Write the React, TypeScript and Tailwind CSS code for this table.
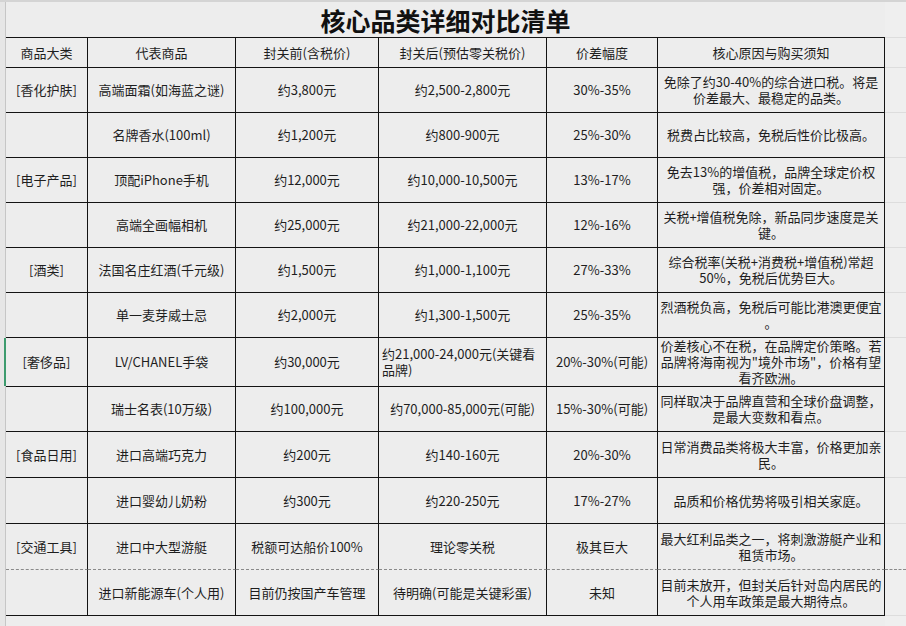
type Cell = string | string[]

interface Row {
  h: string
  cells: [Cell, Cell, Cell, Cell, Cell, Cell]
  leftAlign4?: boolean
  dashed?: boolean
  selected?: boolean
}

const GRID = 'grid grid-cols-[6px_82px_148px_143px_168px_111px_227px_21px]'

const HEADERS = [
  '商品大类',
  '代表商品',
  '封关前(含税价)',
  '封关后(预估零关税价)',
  '价差幅度',
  '核心原因与购买须知',
]

const ROWS: Row[] = [
  {
    h: 'h-[45px]',
    cells: [
      '[香化护肤]',
      '高端面霜(如海蓝之谜)',
      '约3,800元',
      '约2,500-2,800元',
      '30%-35%',
      ['免除了约30-40%的综合进口税。将是', '价差最大、最稳定的品类。'],
    ],
  },
  {
    h: 'h-[45px]',
    cells: ['', '名牌香水(100ml)', '约1,200元', '约800-900元', '25%-30%', ['税费占比较高，免税后性价比极高。']],
  },
  {
    h: 'h-[45px]',
    cells: [
      '[电子产品]',
      '顶配iPhone手机',
      '约12,000元',
      '约10,000-10,500元',
      '13%-17%',
      ['免去13%的增值税，品牌全球定价权', '强，价差相对固定。'],
    ],
  },
  {
    h: 'h-[45px]',
    cells: [
      '',
      '高端全画幅相机',
      '约25,000元',
      '约21,000-22,000元',
      '12%-16%',
      ['关税+增值税免除，新品同步速度是关', '键。'],
    ],
  },
  {
    h: 'h-[45px]',
    cells: [
      '[酒类]',
      '法国名庄红酒(千元级)',
      '约1,500元',
      '约1,000-1,100元',
      '27%-33%',
      ['综合税率(关税+消费税+增值税)常超', '50%，免税后优势巨大。'],
    ],
  },
  {
    h: 'h-[45px]',
    cells: [
      '',
      '单一麦芽威士忌',
      '约2,000元',
      '约1,300-1,500元',
      '25%-35%',
      ['烈酒税负高，免税后可能比港澳更便宜', '。'],
    ],
  },
  {
    h: 'h-[48px]',
    selected: true,
    leftAlign4: true,
    cells: [
      '[奢侈品]',
      'LV/CHANEL手袋',
      '约30,000元',
      ['约21,000-24,000元(关键看', '品牌)'],
      '20%-30%(可能)',
      ['价差核心不在税，在品牌定价策略。若', '品牌将海南视为"境外市场"，价格有望', '看齐欧洲。'],
    ],
  },
  {
    h: 'h-[46px]',
    cells: [
      '',
      '瑞士名表(10万级)',
      '约100,000元',
      '约70,000-85,000元(可能)',
      '15%-30%(可能)',
      ['同样取决于品牌直营和全球价盘调整，', '是最大变数和看点。'],
    ],
  },
  {
    h: 'h-[46px]',
    cells: [
      '[食品日用]',
      '进口高端巧克力',
      '约200元',
      '约140-160元',
      '20%-30%',
      ['日常消费品类将极大丰富，价格更加亲', '民。'],
    ],
  },
  {
    h: 'h-[46px]',
    cells: ['', '进口婴幼儿奶粉', '约300元', '约220-250元', '17%-27%', ['品质和价格优势将吸引相关家庭。']],
  },
  {
    h: 'h-[46px]',
    dashed: true,
    cells: [
      '[交通工具]',
      '进口中大型游艇',
      '税额可达船价100%',
      '理论零关税',
      '极其巨大',
      ['最大红利品类之一，将刺激游艇产业和', '租赁市场。'],
    ],
  },
  {
    h: 'h-[46px]',
    cells: [
      '',
      '进口新能源车(个人用)',
      '目前仍按国产车管理',
      '待明确(可能是关键彩蛋)',
      '未知',
      ['目前未放开，但封关后针对岛内居民的', '个人用车政策是最大期待点。'],
    ],
  },
]

function CellText({ value }: { value: Cell }) {
  if (Array.isArray(value)) {
    return (
      <span className="flex flex-col">
        {value.map((line, i) => (
          <span key={i} className="block whitespace-nowrap">
            {line}
          </span>
        ))}
      </span>
    )
  }
  return <span className="whitespace-nowrap">{value}</span>
}

function TableRow({ row }: { row: Row }) {
  const edge = row.dashed
    ? 'border-r border-b border-r-[#141414] border-b-[#8a8a8a] [border-bottom-style:dashed]'
    : 'border-r border-b border-[#141414]'
  return (
    <div className={`${GRID} ${row.h}`}>
      <div
        className={
          row.selected
            ? 'border-r-2 border-[#3d9b6e] bg-[#e6e6e6]'
            : 'border-r border-[#c6c6c6] bg-[#e6e6e6]'
        }
      />
      {row.cells.map((cell, i) => (
        <div
          key={i}
          className={`flex items-center ${
            i === 3 && row.leftAlign4
              ? 'justify-start px-[3px] text-left'
              : 'justify-center px-0.5 text-center'
          } ${edge}`}
        >
          <CellText value={cell} />
        </div>
      ))}
      <div
        className={
          row.dashed
            ? 'border-b border-[#8a8a8a] border-dashed bg-[#efefef]'
            : 'border-b border-[#dddddd] bg-[#efefef]'
        }
      />
    </div>
  )
}

export default function App() {
  return (
    <div className="flex h-[626px] w-[906px] flex-col overflow-hidden border-t-2 border-[#d4d4d4] bg-[#ededed] font-['Noto_Sans_CJK_SC',sans-serif] text-[13px] leading-[16px] text-[#1e1e1e]">
      <div className={`${GRID} h-[36px]`}>
        <div className="border-r border-[#c6c6c6] bg-[#e6e6e6]" />
        <div className="col-span-6 flex items-center justify-center border-b border-[#141414] pt-px text-[25px] font-bold leading-none text-[#111]">
          核心品类详细对比清单
        </div>
        <div className="border-b border-[#dddddd] bg-[#efefef]" />
      </div>

      <div className={`${GRID} h-[30px]`}>
        <div className="border-r border-[#c6c6c6] bg-[#e6e6e6]" />
        {HEADERS.map((label) => (
          <div
            key={label}
            className="flex items-center justify-center border-r border-b border-[#141414] text-center"
          >
            <span className="whitespace-nowrap">{label}</span>
          </div>
        ))}
        <div className="border-b border-[#dddddd] bg-[#efefef]" />
      </div>

      {ROWS.map((row, i) => (
        <TableRow key={i} row={row} />
      ))}

      <div className={`${GRID} flex-1`}>
        <div className="border-r border-[#c6c6c6] bg-[#e6e6e6]" />
        <div className="col-span-6" />
        <div className="bg-[#efefef]" />
      </div>
    </div>
  )
}
